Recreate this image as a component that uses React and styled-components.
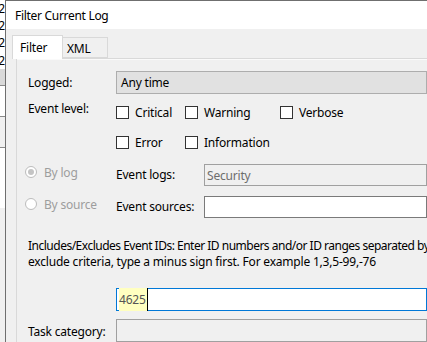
import styled, { createGlobalStyle } from 'styled-components'

const GlobalStyle = createGlobalStyle`
    html, body {
        margin: 0;
        padding: 0;
        background: #ffffff;
        overflow: hidden;
    }
    body {
        font-family: "Noto Sans", "Open Sans", sans-serif;
        font-size: 12px;
        color: #000;
    }
`

const Screen = styled.div`
    display: flex;
    width: 427px;
    height: 342px;
    overflow: hidden;
`

// window behind the dialog, only a sliver shows
const BackWindow = styled.div`
    width: 5px;
    flex-shrink: 0;
    display: flex;
    flex-direction: column;
    overflow: hidden;
    background: #fff;
`

const BackRow = styled.div`
    height: ${p => p.h}px;
    flex-shrink: 0;
    background: ${p => p.bg || '#fff'};
    border-bottom: ${p => (p.line ? '1px solid #8a8a8a' : 'none')};
    display: flex;
    justify-content: flex-end;
    align-items: center;
    font-size: 12px;
    line-height: 1;
    white-space: nowrap;
    overflow: hidden;
    color: #000;
`

const Dialog = styled.div`
    flex: 1;
    display: flex;
    flex-direction: column;
    border-left: 1px solid #6f6f6f;
    border-top: 1px solid #6f6f6f;
    background: #f0f0f0;
    min-width: 0;
`

const TitleBar = styled.div`
    height: 30px;
    background: #fff;
    display: flex;
    align-items: center;
    padding-left: 9px;
    padding-top: 1px;
    box-sizing: border-box;
    letter-spacing: -0.3px;
`

const Body = styled.div`
    flex: 1;
    display: flex;
    flex-direction: column;
    padding: 6px 0 0 6px;
`

const TabStrip = styled.div`
    display: flex;
    align-items: flex-end;
    height: 23px;
    position: relative;
    z-index: 1;
`

const Tab = styled.div`
    box-sizing: border-box;
    width: ${p => p.w}px;
    height: ${p => (p.active ? 24 : 21)}px;
    margin-bottom: ${p => (p.active ? -1 : 0)}px;
    border: 1px solid #d9d9d9;
    border-bottom: ${p => (p.active ? 'none' : '1px solid #d9d9d9')};
    border-left: ${p => (p.first ? '1px solid #d9d9d9' : 'none')};
    background: ${p => (p.active ? '#ffffff' : '#f0f0f0')};
    padding-left: ${p => p.pl}px;
    padding-top: ${p => (p.active ? 3 : 2)}px;
    letter-spacing: -0.2px;
`

const TabPanel = styled.div`
    flex: 1;
    margin-left: 4px;
    border-top: 1px solid #d9d9d9;
    border-left: 1px solid #d9d9d9;
    box-shadow: inset 0 1px 0 #fafafa;
    padding: 12px 0 0 11px;
    display: flex;
    flex-direction: column;
    white-space: nowrap;
    min-width: 0;
`

const FormRow = styled.div`
    display: grid;
    grid-template-columns: 88px minmax(0, 1fr);
    align-items: start;
    margin-top: ${p => p.mt || 0}px;
`

const Label = styled.div`
    padding-top: ${p => p.pt || 0}px;
    letter-spacing: -0.2px;
`

const Field = styled.div`
    box-sizing: border-box;
    height: ${p => p.h || 22}px;
    border: 1px solid ${p => p.border || '#adadad'};
    background: ${p => p.bg || '#fff'};
    color: ${p => p.color || '#000'};
    display: flex;
    align-items: center;
    padding-left: ${p => p.pl || 4}px;
    letter-spacing: -0.2px;
    min-width: 0;
`

const CheckGrid = styled.div`
    display: grid;
    grid-template-columns: 69px 95px auto;
    row-gap: 17px;
    padding-top: 12px;
`

const CheckItem = styled.div`
    display: flex;
    align-items: center;
    height: 13px;
    gap: 6px;
    letter-spacing: -0.2px;
`

const Box = styled.span`
    width: 13px;
    height: 13px;
    box-sizing: border-box;
    border: 1px solid #333;
    background: #fff;
    flex-shrink: 0;
`

const SourceGrid = styled.div`
    display: grid;
    grid-template-columns: 91px 88px minmax(0, 1fr);
    grid-auto-rows: 22px;
    row-gap: 10px;
    align-items: center;
    margin: 15px 0 0 -3px;
`

const RadioItem = styled.div`
    display: flex;
    align-items: center;
    gap: 7px;
    margin-top: -6px;
    color: #9d9d9d;
    letter-spacing: -0.2px;
`

const Radio = styled.span`
    width: 12px;
    height: 12px;
    box-sizing: border-box;
    border-radius: 50%;
    border: 1px solid #bcbcbc;
    background: #fff;
    display: flex;
    align-items: center;
    justify-content: center;
    &::after {
        content: '';
        width: 6px;
        height: 6px;
        border-radius: 50%;
        background: ${p => (p.checked ? '#c4c4c4' : 'transparent')};
    }
`

const SourceLabel = styled.div`
    letter-spacing: -0.2px;
    margin-top: -2px;
`

const Note = styled.p`
    margin: 20px 0 0 0;
    line-height: 16px;
`

const NoteLine = styled.span`
    display: block;
    letter-spacing: ${p => p.ls || -0.2}px;
`

const Highlight = styled.span`
    background: #ffffc0;
    color: #555;
    padding: 3px 1px 3px 0;
    border-right: 1px solid #000;
`

export default function App() {
    return (
        <Screen>
            <GlobalStyle />
            <BackWindow>
                <BackRow h={17}>02</BackRow>
                <BackRow h={17}>02</BackRow>
                <BackRow h={18}>02</BackRow>
                <BackRow h={17}>02</BackRow>
                <BackRow h={16} bg="#d9d9d9" line />
                <BackRow h={30} line />
                <BackRow h={30} line bg="#f0f0f0" />
                <BackRow h={60} />
                <BackRow h={137} bg="#f0f0f0" />
            </BackWindow>
            <Dialog>
                <TitleBar>Filter Current Log</TitleBar>
                <Body>
                    <TabStrip>
                        <Tab active first w={51} pl={7}>Filter</Tab>
                        <Tab w={45} pl={4}>XML</Tab>
                    </TabStrip>
                    <TabPanel>
                        <FormRow>
                            <Label pt={3}>Logged:</Label>
                            <Field h={23} bg="#e1e1e1" border="#adadad">Any time</Field>
                        </FormRow>
                        <FormRow>
                            <Label pt={6}>Event level:</Label>
                            <CheckGrid>
                                <CheckItem><Box />Critical</CheckItem>
                                <CheckItem><Box />Warning</CheckItem>
                                <CheckItem><Box />Verbose</CheckItem>
                                <CheckItem><Box />Error</CheckItem>
                                <CheckItem><Box />Information</CheckItem>
                            </CheckGrid>
                        </FormRow>
                        <SourceGrid>
                            <RadioItem><Radio checked />By log</RadioItem>
                            <SourceLabel>Event logs:</SourceLabel>
                            <Field bg="#f0f0f0" border="#a0a0a0" color="#6d6d6d" pl={2}>Security</Field>
                            <RadioItem><Radio />By source</RadioItem>
                            <SourceLabel>Event sources:</SourceLabel>
                            <Field border="#7a7a7a" />
                        </SourceGrid>
                        <Note>
                            <NoteLine ls={-0.5}>
                                Includes/Excludes Event IDs: Enter ID numbers and/or ID ranges separated by commas. To
                            </NoteLine>
                            <NoteLine>exclude criteria, type a minus sign first. For example 1,3,5-99,-76</NoteLine>
                        </Note>
                        <FormRow mt={18}>
                            <span />
                            <Field h={23} border="#0078d7" pl={2}>
                                <Highlight>4625</Highlight>
                            </Field>
                        </FormRow>
                        <FormRow mt={8}>
                            <Label pt={4}>Task category:</Label>
                            <Field h={23} bg="#f0f0f0" border="#a0a0a0" />
                        </FormRow>
                    </TabPanel>
                </Body>
            </Dialog>
        </Screen>
    )
}
